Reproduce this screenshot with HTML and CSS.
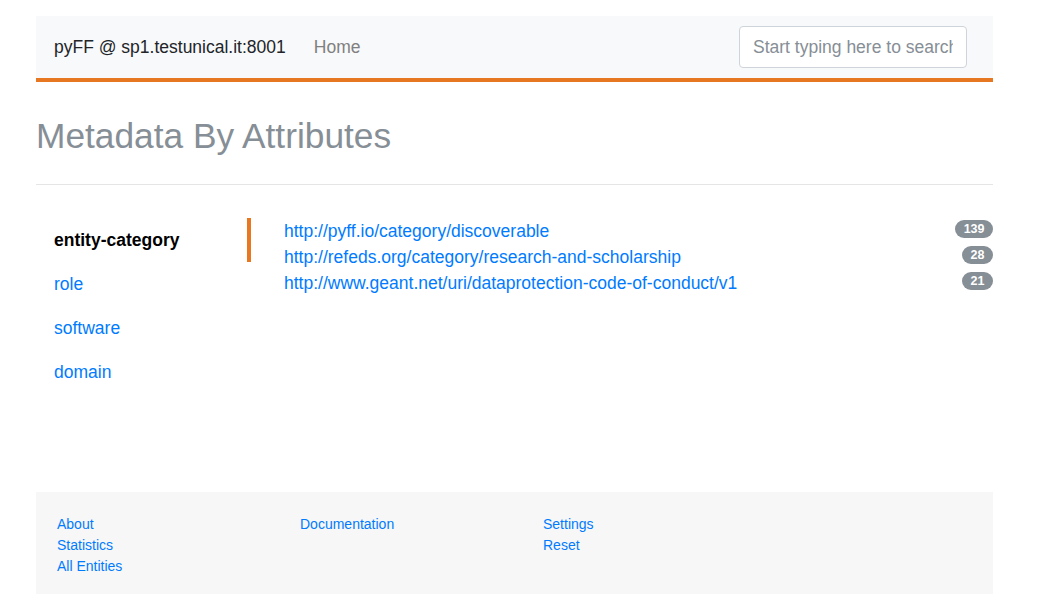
FILE: index.html
```html
<!DOCTYPE html>
<html lang="en">
<head>
<meta charset="utf-8">
<title>Metadata By Attributes</title>
<link rel="stylesheet" href="styles.css">
</head>
<body>
<div class="container">
  <nav class="navbar">
    <a class="brand" href="#">pyFF @ sp1.testunical.it:8001</a>
    <a class="nav-home" href="#">Home</a>
    <input class="search" type="text" placeholder="Start typing here to search">
  </nav>

  <h1 class="title">Metadata By Attributes</h1>
  <hr class="rule">

  <div class="attrs">
    <ul class="side">
      <li class="side-item active">entity-category</li>
      <li class="side-item"><a href="#">role</a></li>
      <li class="side-item"><a href="#">software</a></li>
      <li class="side-item"><a href="#">domain</a></li>
    </ul>
    <ul class="values">
      <li class="value"><a href="#">http://pyff.io/category/discoverable</a><span class="badge">139</span></li>
      <li class="value"><a href="#">http://refeds.org/category/research-and-scholarship</a><span class="badge">28</span></li>
      <li class="value"><a href="#">http://www.geant.net/uri/dataprotection-code-of-conduct/v1</a><span class="badge">21</span></li>
    </ul>
  </div>

  <footer class="footer">
    <ul class="fcol">
      <li><a href="#">About</a></li>
      <li><a href="#">Statistics</a></li>
      <li><a href="#">All Entities</a></li>
    </ul>
    <ul class="fcol">
      <li><a href="#">Documentation</a></li>
    </ul>
    <ul class="fcol">
      <li><a href="#">Settings</a></li>
      <li><a href="#">Reset</a></li>
    </ul>
  </footer>
</div>
</body>
</html>
```

FILE: styles.css
```css
html, body {
  margin: 0;
  padding: 0;
  background: #fff;
}
body {
  font-family: "Liberation Sans", Arial, sans-serif;
  font-size: 17.5px;
  line-height: 1.5;
  color: #212529;
  padding-top: 16px;
}
a {
  color: #007bff;
  text-decoration: none;
}
ul {
  list-style: none;
  margin: 0;
  padding: 0;
}
.container {
  width: 957px;
  margin-left: 36px;
}

/* navbar */
.navbar {
  display: flex;
  align-items: center;
  height: 62px;
  padding: 0 26px 0 18px;
  background: #f8f9fa;
  border-bottom: 4px solid #e87722;
}
.brand {
  color: #212529;
  font-size: 17.5px;
}
.nav-home {
  margin-left: 28px;
  color: #808080;
}
.search {
  margin-left: auto;
  box-sizing: border-box;
  width: 228px;
  height: 42px;
  padding: 0 13px;
  border: 1px solid #ced4da;
  border-radius: 4px;
  background: #fff;
  font-family: "Liberation Sans", Arial, sans-serif;
  font-size: 17.5px;
  color: #495057;
  outline: none;
}
.search::placeholder {
  color: #868e96;
  opacity: 1;
}

/* heading */
.title {
  margin: 33px 0 0;
  font-size: 35.3px;
  font-weight: 400;
  line-height: 42px;
  color: #868e96;
}
.rule {
  margin: 27px 0 0;
  border: 0;
  border-top: 1px solid #e5e5e5;
  height: 0;
}

/* attributes */
.attrs {
  display: flex;
  margin-top: 33px;
}
.side {
  width: 215px;
  flex: none;
}
.side-item {
  height: 44px;
  line-height: 44px;
  padding-left: 18px;
  box-sizing: border-box;
}
.side-item.active {
  font-weight: 700;
  color: #000;
  border-right: 4px solid #e87722;
}
.values {
  flex: 1;
  padding-left: 33px;
}
.value {
  display: flex;
  align-items: flex-start;
  line-height: 26px;
}
.badge {
  margin-left: auto;
  margin-top: 2px;
  background: #868e96;
  color: #fff;
  font-size: 12.5px;
  font-weight: 700;
  line-height: 18px;
  padding: 0 8.5px;
  border-radius: 9px;
}

/* footer */
.footer {
  display: grid;
  grid-template-columns: 243px 243px 243px;
  margin-top: 98px;
  padding: 22px 21px 17px;
  background: #f7f7f7;
  font-size: 14px;
  line-height: 21px;
  min-height: 63px;
}
```
